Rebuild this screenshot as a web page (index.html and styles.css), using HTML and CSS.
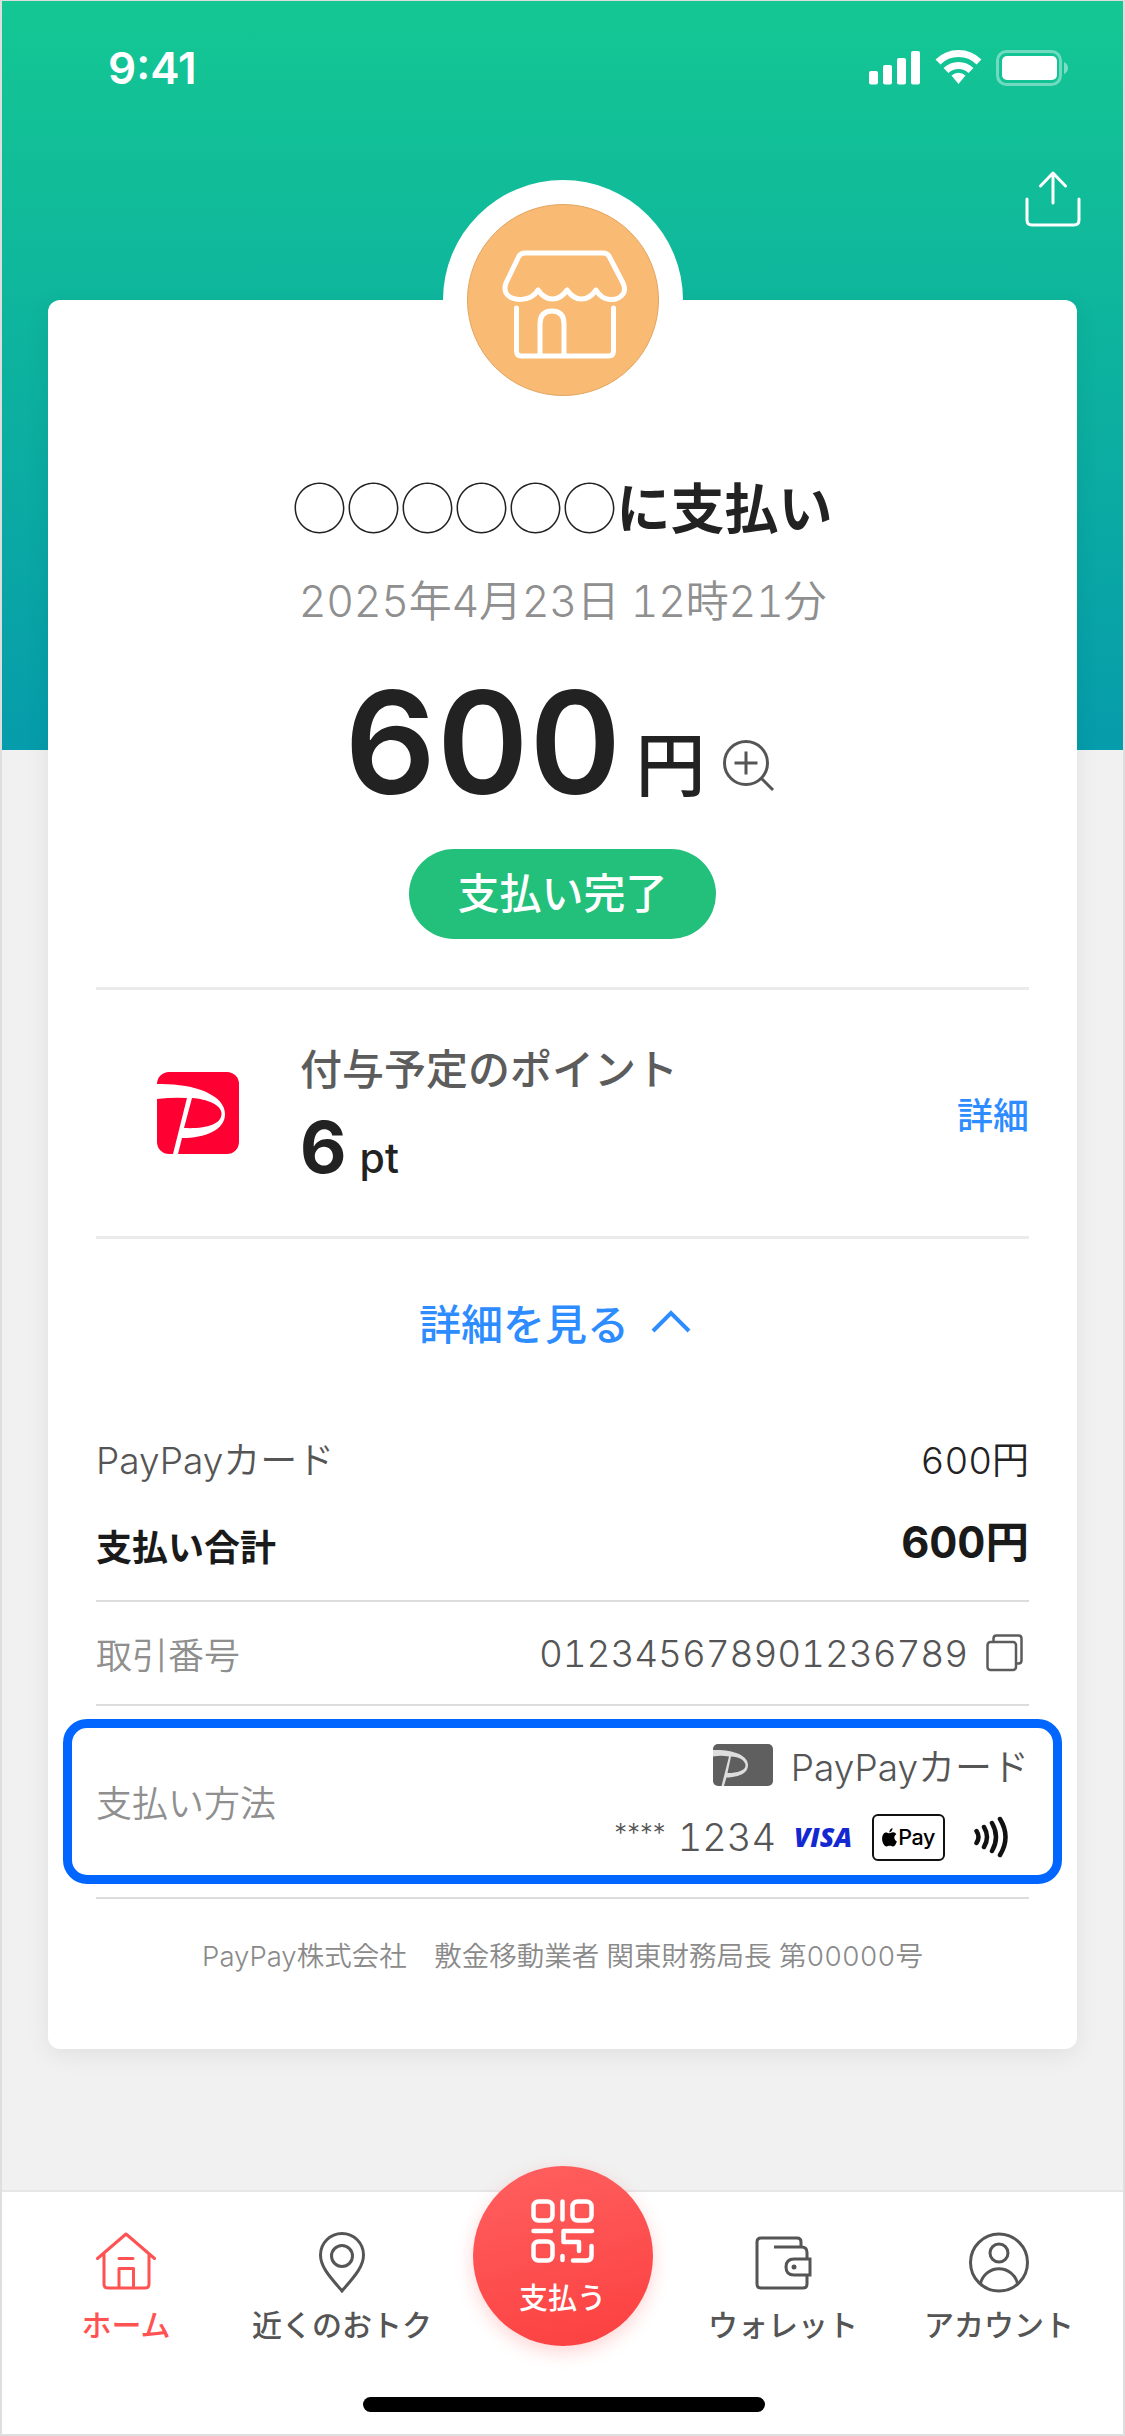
FILE: index.html
```html
<!DOCTYPE html>
<html lang="ja">
<head>
<meta charset="utf-8">
<title>支払い完了</title>
<link rel="stylesheet" href="styles.css">
</head>
<body>
<div class="screen">
  <header class="hero">
    <div class="status">
      <span class="time">9:41</span>
      <svg class="status-icons" width="200" height="36" viewBox="0 0 200 36" fill="#fff">
        <rect x="0" y="21" width="9" height="13.500" rx="2"/><rect x="14" y="15" width="9" height="19.500" rx="2"/><rect x="28" y="8" width="9" height="26.500" rx="2"/><rect x="42" y="1" width="9" height="33.500" rx="2"/>
        <path d="M89.500 34l-7-8.500a10.500 10.500 0 0 1 14 0z"/>
        <g fill="none" stroke="#fff" stroke-width="7"><path d="M77 20.500a18 18 0 0 1 25 0"/><path d="M69 12a29 29 0 0 1 41 0"/></g>
        <rect x="128.500" y="1.500" width="63" height="33" rx="9" fill="none" stroke="#fff" stroke-opacity=".4" stroke-width="3"/>
        <rect x="133" y="6" width="55" height="24" rx="5"/><path d="M195 12q4 2 4 6t-4 6z" opacity=".45"/>
      </svg>
    </div>
    <svg class="share" width="56" height="56" viewBox="0 0 56 56" fill="none" stroke="#fff" stroke-width="3" stroke-linecap="round" stroke-linejoin="round"><path d="M2 28v21q0 5 5 5h42q5 0 5-5V28M28 32V2M15.500 15L28 2l12.500 13"/></svg>
  </header>

  <main class="card">
    <div class="avatar"><div class="disc">
      <svg width="126" height="110" viewBox="0 0 126 110" fill="none" stroke="#fff" stroke-width="5" stroke-linecap="round" stroke-linejoin="round">
        <path d="M24 3h78q4 0 6 3l14 27q3 7 0 11c-6 8-20 8-27-4-8 12-21 12-29 0-8 12-21 12-29 0C30 52 10 52 5 43q-2-5 0-10L18 6q2-3 6-3z"/>
        <path d="M15.500 58v43q0 5 5 5h87q5 0 5-5V58M39 106V74q0-13 12-13t12 13v32"/>
      </svg>
    </div></div>
    <h1 class="title"><span class="rings">◯◯◯◯◯◯</span>に支払い</h1>
    <p class="date">2025年4月23日 12時21分</p>
    <div class="amount"><span class="num">600</span><span class="yen">円</span>
      <svg width="54" height="54" viewBox="0 0 54 54" fill="none" stroke="#555" stroke-width="3"><circle cx="25" cy="25" r="21.500"/><path d="M13.500 25h23M25 13.500v23M40 40l12 12"/></svg>
    </div>
    <div class="done">支払い完了</div>

    <section class="points">
      <svg class="logo" width="82" height="82" viewBox="0 0 82 82"><rect width="82" height="82" rx="12" fill="#ff0033"/><path d="M0 12C35 11 68 22 68 42 68 58 48 66 25 66L21 82H16L30 26Q16 25 0 27zM35 26L27 56C48 57 64 53 64.500 42 65 33 50 27 35 26z" fill="#fff"/></svg>
      <div class="points-text"><div class="points-label">付与予定のポイント</div><div class="points-value"><b>6</b><span>pt</span></div></div>
      <a class="more">詳細</a>
    </section>

    <div class="toggle">詳細を見る<svg width="40" height="24" viewBox="0 0 40 24" fill="none" stroke="#2d8cff" stroke-width="4"><path d="M2 21L20 3l18 18"/></svg></div>

    <div class="row row-card"><span class="brand">PayPayカード</span><span class="dark digits">600円</span></div>
    <div class="row row-total"><strong>支払い合計</strong><strong class="sum">600円</strong></div>
    <div class="row row-id"><span class="muted">取引番号</span><span class="id"><span class="digits">012345678901236789</span><svg width="38" height="38" viewBox="0 0 38 38" fill="none" stroke="#5c5c5c" stroke-width="2.500"><rect x="1.500" y="8" width="28.500" height="28" rx="3"/><path d="M7.500 8V4.500q0-3 3-3h22q3 0 3 3v22q0 3-3 3H30"/></svg></span></div>
    <div class="row row-method">
      <span class="muted">支払い方法</span>
      <div class="method">
        <div class="line"><svg width="60" height="42" viewBox="0 0 60 42"><rect width="60" height="42" rx="5" fill="#5f5f5f"/><path d="M0 6C17 5 35 10 35 21 35 30 25 33 13.500 33.500L11 42H8.500L16 12.500Q8 11 0 12.500zM18 12.500L14.500 29C25 29 33 26 32.500 21 32 16 26 13 18 12.500z" fill="#ddd"/></svg><span class="brand">PayPayカード</span></div>
        <div class="line line-b"><span class="stars">****</span><span class="digits last4">1234</span><span class="visa">VISA</span>
          <span class="apple"><svg width="15" height="19" viewBox="0 0 14 18"><path d="M9.800 0q.2 3-2.900 4.200Q6.700 1.200 9.800 0M7 5c1 0 2-1 3.500-.9Q12.500 4.200 13.500 6c-3 2-2.200 5.500.5 6.700-1 2.800-2.300 4.800-3.800 4.800-1.200 0-1.600-.7-3-.7s-1.900.7-3 .7C2 17.500 0 13.800 0 10.300 0 6 2 4.200 4 4.200 5.200 4.200 6 5 7 5"/></svg>Pay</span>
          <svg class="nfc" width="36" height="42" viewBox="0 0 36 42" fill="none" stroke="#111" stroke-width="4.500" stroke-linecap="round"><path d="M2.500 15q4 6 0 12M10 11q6 10 0 20M18 7q8 14 0 28M26 3q11 18 0 36"/></svg></div>
      </div>
    </div>
    <p class="legal">PayPay株式会社　敷金移動業者 関東財務局長 第00000号</p>
  </main>

  <nav class="tabs">
    <a class="tab tab-home"><svg width="62" height="62" viewBox="0 0 62 62" fill="none" stroke="currentColor" stroke-width="3" stroke-linecap="round" stroke-linejoin="round"><path d="M2.500 27.500L31 3l28.500 24.500M9 23v30q0 4 4 4h37q4 0 4-4V23M24 27.500h14M24 57V37.500h14.500V57"/></svg>ホーム</a>
    <a class="tab tab-near"><svg width="62" height="62" viewBox="0 0 62 62" fill="none" stroke="currentColor" stroke-width="3"><path d="M31 60C19 46 9.500 36 9.500 24a21.500 21.500 0 0 1 43 0C52.500 36 43 46 31 60z"/><circle cx="31" cy="25" r="10.500"/></svg>近くのおトク</a>
    <a class="pay"><svg width="64" height="66" viewBox="0 0 64 66" fill="none" stroke="#fff" stroke-width="4.500" stroke-linecap="round" stroke-linejoin="round"><rect x="2.500" y="2.500" width="19" height="19" rx="5"/><rect x="41.500" y="2.500" width="19" height="19" rx="5"/><rect x="2.500" y="42.500" width="19" height="19" rx="5"/><path d="M31.500 2.500v18M2.500 32H20M61 32H32.500v11H48v9M60.500 47v9.500q0 5-5 5H42M31.500 57v4"/></svg>支払う</a>
    <a class="tab tab-wallet"><svg width="62" height="62" viewBox="0 0 62 62" fill="none" stroke="currentColor" stroke-width="3"><path d="M22 16h27.500q5.500 0 5.500 5.500V28M49 16v-5q0-4-4-4H9Q5 7 5 11v42q0 4 4 4h42q4 0 4-4v-9M58 28H42q-8 0-8 8t8 8h16z"/><circle cx="42" cy="36" r="2.500" fill="currentColor" stroke="none"/></svg>ウォレット</a>
    <a class="tab tab-account"><svg width="62" height="62" viewBox="0 0 62 62" fill="none" stroke="currentColor" stroke-width="3"><circle cx="31" cy="31.500" r="28.500"/><circle cx="31" cy="22" r="9"/><path d="M12.500 52.500a19 19 0 0 1 37 0"/></svg>アカウント</a>
    <div class="indicator"></div>
  </nav>
</div>
</body>
</html>
```
FILE: styles.css
```css
* { box-sizing: border-box; margin: 0; }
body { font-family: Inter, "Noto Sans CJK JP", sans-serif; font-feature-settings: "tnum"; color: #222; }
svg { display: block; flex: none; }
.screen { width: 1125px; height: 2436px; background: #f1f1f1; position: relative; overflow: hidden; display: flex; flex-direction: column; }
.screen::after { content: ""; position: absolute; inset: 0; border: 2px solid #dedede; border-top-width: 1px; pointer-events: none; }
.hero { height: 750px; flex: none; margin-bottom: -450px; background: linear-gradient(#14c793, #069cab); }
.status { display: flex; justify-content: space-between; align-items: center; padding: 50px 56px 0 108px; height: 86px; color: #fff; }
.time { font-size: 44px; font-weight: 600; line-height: 36px; font-feature-settings: normal; }
.share { margin: 85px 44px 0 auto; }

.card { position: relative; width: 1029px; height: 1749px; flex: none; margin: 0 auto; padding: 0 48px; background: #fff; border-radius: 12px; box-shadow: 0 6px 24px rgba(0,0,0,.07); display: flex; flex-direction: column; }
.avatar { width: 240px; height: 240px; margin: -120px auto 0; padding: 24px; background: #fff; border-radius: 50%; }
.disc { width: 192px; height: 192px; border-radius: 50%; background: #f9ba74; border: 1px solid #e3a561; display: flex; align-items: center; justify-content: center; }
.disc svg { margin: 10px 0 0 2px; }
.title { height: 80px; margin-top: 46px; line-height: 80px; text-align: center; font-size: 54px; font-weight: 700; white-space: nowrap; }
.rings { font-family: "Noto Sans CJK JP", sans-serif; font-weight: 300; }
.date { height: 60px; line-height: 60px; margin-top: 25px; text-align: center; font-size: 43px; letter-spacing: -.3px; font-weight: 350; color: #8f8f8f; white-space: nowrap; }
.amount { display: flex; align-items: baseline; height: 170px; margin-top: 26px; padding-left: 248px; line-height: 170px; }
.num { font-size: 143px; font-weight: 600; }
.yen { font-size: 70px; font-weight: 500; margin-left: 14px; position: relative; top: -3px; }
.amount svg { margin-left: 15px; position: relative; top: -2px; }
.done { width: 307px; height: 90px; margin: 22px auto 0; border-radius: 45px; background: #22c07a; color: #fff; font-size: 42px; font-weight: 500; line-height: 89px; text-align: center; }

.points { height: 252px; margin-top: 48px; border-top: 3px solid #ebebeb; border-bottom: 3px solid #ebebeb; display: flex; align-items: center; padding-left: 61px; }
.points-text { margin-left: 61px; flex: 1; margin-top: -6px; }
.points-label { font-size: 42px; font-weight: 500; line-height: 60px; color: #5c5c5c; }
.points-value { display: flex; align-items: baseline; line-height: 80px; padding-top: 7px; height: 80px; }
.points-value b { font-size: 72px; }
.points-value span { font-size: 41px; font-weight: 500; margin-left: 13px; }
.more { font-size: 36px; font-weight: 500; color: #2d8cff; }
.toggle { height: 166px; padding-left: 323px; display: flex; align-items: center; gap: 22px; color: #2d8cff; font-size: 42px; font-weight: 500; }

.row { display: flex; justify-content: space-between; align-items: center; font-size: 36px; font-weight: 350; color: #555; white-space: nowrap; }
.row-card { height: 108px; }
.row-total { height: 90px; border-bottom: 2px solid #dcdcdc; padding-bottom: 22px; color: #1a1a1a; }
.row-total strong { font-weight: 700; }
.sum { font-size: 43.500px; margin-top: -11px; }
.brand { font-size: 37px; }
.dark { color: #222; }
.muted { color: #8f8f8f; }
.digits { font-size: 37px; letter-spacing: -.1px; }
.row-id { height: 104px; border-bottom: 2px solid #dcdcdc; }
.id { display: flex; align-items: center; gap: 18px; padding-right: 5px; }
.row-method { margin: 13px -33px; height: 165px; border: 9px solid #06f; border-radius: 24px; padding: 0 24px; }
.row-method > .muted { margin-top: -2px; }
.method { display: flex; flex-direction: column; align-items: flex-end; padding-bottom: 2px; }
.line { display: flex; align-items: center; justify-content: flex-end; height: 71px; gap: 18px; }
.line-b { gap: 0; padding: 2px 19px 0 0; }
.stars { font-size: 26px; letter-spacing: -4px; padding-bottom: 10px; }
.last4 { margin-left: 14px; font-size: 38px; letter-spacing: 0; }
.visa { margin-left: 18px; width: 62px; font: italic 800 26.500px "Open Sans", sans-serif; color: #1428d2; }
.apple { width: 73px; height: 47px; margin-left: 16px; border: 2px solid #111; border-radius: 6px; display: flex; align-items: center; justify-content: center; gap: 1px; font-size: 21.500px; font-weight: 500; letter-spacing: -.4px; color: #000; }
.nfc { margin-left: 29px; }
.legal { border-top: 2px solid #dcdcdc; height: 152px; padding-top: 37px; line-height: 40px; font-size: 27.500px; font-weight: 350; color: #8a8a8a; text-align: center; white-space: nowrap; }

.tabs { position: relative; flex: none; height: 246px; margin-top: 141px; background: #fff; border-top: 2px solid #e6e6e6; display: grid; grid-template-columns: 36px 180px 252px 189px 252px 180px; justify-items: center; align-items: start; }
.tab { display: flex; flex-direction: column; align-items: center; gap: 8px; margin-top: 39px; font-size: 30px; line-height: 48px; font-weight: 500; color: #555; white-space: nowrap; }
.tab-home { grid-column: 2; color: #ff5252; }
.tab-near { grid-column: 3; }
.tab-wallet { grid-column: 5; }
.tab-account { grid-column: 6; }
.pay { grid-column: 4; width: 180px; height: 180px; margin-top: -26px; padding-top: 33px; border-radius: 50%; background: linear-gradient(165deg, #ff6060, #fc3f3f); box-shadow: 0 6px 18px rgba(255,60,60,.22); display: flex; flex-direction: column; align-items: center; gap: 12px; color: #fff; font-size: 29px; font-weight: 500; line-height: 44px; }
.indicator { position: absolute; left: 363px; bottom: 24px; width: 402px; height: 15px; border-radius: 8px; background: #000; }
```
